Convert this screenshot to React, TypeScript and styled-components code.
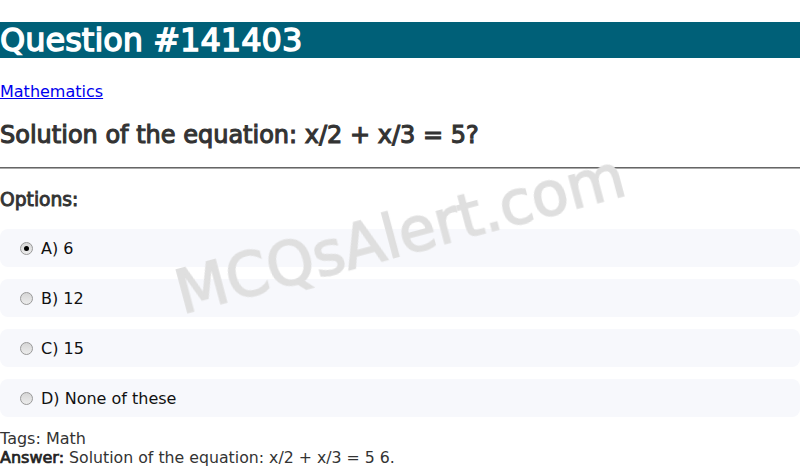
import React from "react";
import styled, { createGlobalStyle, css } from "styled-components";

const GlobalStyle = createGlobalStyle`
  body {
    margin: 0;
    font-family: "DejaVu Sans", Verdana, sans-serif;
    background: #fff;
    color: #333;
  }
`;

// the page's bold text is a synthesised bold of the regular face
const fakeBold = (stroke: number) => css`
  font-weight: normal;
  -webkit-text-stroke: ${stroke}px currentColor;
`;

const Page = styled.div`
  position: relative;
`;

const Header = styled.h1`
  margin: 22px 0 24px;
  background-color: #006078;
  color: #fff;
  font-size: 32px;
  line-height: 36px;
  ${fakeBold(1.4)}
`;

const Category = styled.p`
  margin: 0;
  font-size: 16px;
  a {
    color: #0000ee;
    text-decoration: underline;
  }
`;

const Title = styled.h2`
  margin: 20px 0 18px;
  font-size: 24px;
  color: #333;
  ${fakeBold(1.1)}
`;

const Rule = styled.hr`
  margin: 0;
  border: none;
  border-top: 1px solid #666;
  border-bottom: 1px solid #aaa;
`;

const OptionsLabel = styled.h3`
  margin: 20px 0 19px;
  font-size: 18.7px;
  color: #333;
  ${fakeBold(0.9)}
`;

const OptionList = styled.div`
  display: flex;
  flex-direction: column;
  gap: 12px;
`;

const OptionRow = styled.label`
  display: flex;
  align-items: center;
  gap: 8px;
  height: 38px;
  padding: 0 20px;
  background: #f7f8fc;
  border-radius: 8px;
  font-size: 16px;
  color: #111;
`;

const Radio = styled.span<{ $checked?: boolean }>`
  position: relative;
  flex: none;
  width: 13px;
  height: 13px;
  box-sizing: border-box;
  border-radius: 50%;
  border: 1px solid #999;
  background: linear-gradient(#d6d6d6, #ececec);
  &::after {
    content: "";
    display: ${({ $checked }) => ($checked ? "block" : "none")};
    position: absolute;
    left: 3px;
    top: 3px;
    width: 5px;
    height: 5px;
    border-radius: 50%;
    background: #000;
  }
`;

const Meta = styled.div`
  margin-top: 12px;
  font-size: 16px;
  line-height: 19px;
  color: #333;
`;

const AnswerLine = styled.div`
  font-size: 15.75px;
  b {
    color: #222;
    font-size: 16px;
    ${fakeBold(0.7)}
  }
`;

const Watermark = styled.div`
  position: fixed;
  left: 50%;
  top: 50%;
  transform: translate(-50%, -50%) rotate(-15deg);
  font-family: "DejaVu Sans", sans-serif;
  font-size: 60px;
  color: #dfdfdf;
  white-space: nowrap;
  pointer-events: none;
  user-select: none;
  ${fakeBold(1.6)}
`;

const options = [
  { key: "A", text: "6", checked: true },
  { key: "B", text: "12" },
  { key: "C", text: "15" },
  { key: "D", text: "None of these" },
];

function App() {
  return (
    <>
      <GlobalStyle />
      <Page>
        <Header>Question #141403</Header>
        <Category>
          <a href="#">Mathematics</a>
        </Category>
        <Title>Solution of the equation: x/2 + x/3 = 5?</Title>
        <Rule />
        <OptionsLabel>Options:</OptionsLabel>
        <OptionList>
          {options.map((o) => (
            <OptionRow key={o.key}>
              <Radio $checked={o.checked} />
              {o.key}) {o.text}
            </OptionRow>
          ))}
        </OptionList>
        <Meta>
          <div>Tags: Math</div>
          <AnswerLine>
            <b>Answer:</b> Solution of the equation: x/2 + x/3 = 5 6.
          </AnswerLine>
        </Meta>
        <Watermark>MCQsAlert.com</Watermark>
      </Page>
    </>
  );
}

export default App;
